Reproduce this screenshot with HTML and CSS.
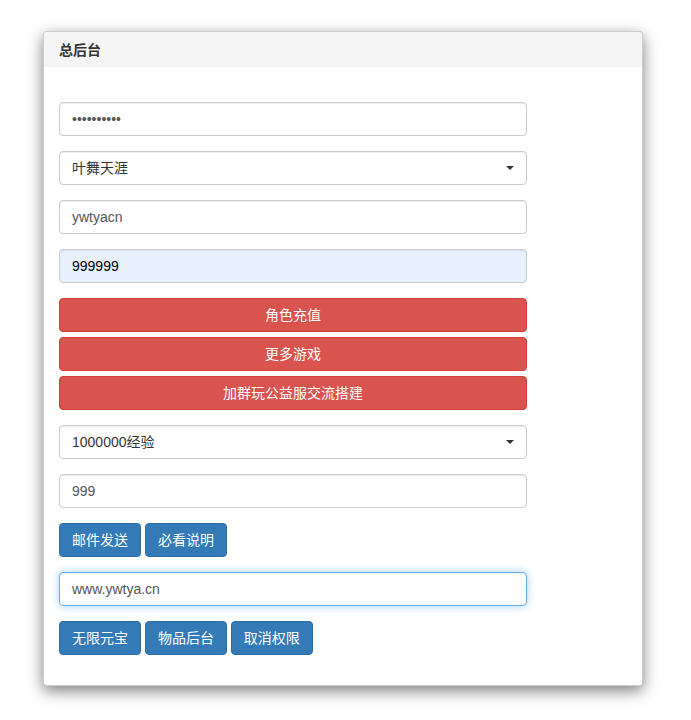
FILE: index.html
```html
<!DOCTYPE html>
<html lang="zh-CN">
<head>
    <meta charset="UTF-8">
    <meta name="viewport" content="width=device-width, initial-scale=1.0">
    <title>总后台</title>
    <link rel="stylesheet" href="styles.css">
</head>
<body>
    <div class="panel">
        <div class="panel-heading">总后台</div>

        <div class="panel-body">
            <!-- Account -->
            <input type="password" class="form-control" value="ywtyacn123">

            <div class="select-wrap">
                <select class="form-control">
                    <option>叶舞天涯</option>
                </select>
            </div>

            <input type="text" class="form-control" value="ywtyacn">
            <input type="text" class="form-control autofill" value="999999">

            <!-- Recharge -->
            <div class="btn-stack">
                <button class="btn btn-danger btn-block">角色充值</button>
                <button class="btn btn-danger btn-block">更多游戏</button>
                <button class="btn btn-danger btn-block">加群玩公益服交流搭建</button>
            </div>

            <!-- Mail -->
            <div class="select-wrap">
                <select class="form-control">
                    <option>1000000经验</option>
                </select>
            </div>

            <input type="text" class="form-control" value="999">

            <div class="btn-row">
                <button class="btn btn-primary">邮件发送</button>
                <button class="btn btn-primary">必看说明</button>
            </div>

            <!-- Admin -->
            <input type="text" class="form-control focus" value="www.ywtya.cn">

            <div class="btn-row">
                <button class="btn btn-primary">无限元宝</button>
                <button class="btn btn-primary">物品后台</button>
                <button class="btn btn-primary">取消权限</button>
            </div>
        </div>
    </div>
</body>
</html>
```

FILE: styles.css
```css
/* General Styles */
body {
    font-family: "Liberation Sans", "Noto Sans CJK SC", sans-serif;
    font-size: 14px;
    color: #333;
    background-color: #fff;
    margin: 0;
    padding: 31px 0 34px 43px;
}

.panel {
    width: 598px;
    background-color: #fff;
    border: 1px solid rgba(0, 0, 0, 0.2);
    border-radius: 4px;
    box-shadow: 0 5px 15px rgba(0, 0, 0, 0.5);
    overflow: hidden;
}

.panel-heading {
    background-color: #f5f5f5;
    padding: 11px 15px 10px;
    height: 14px;
    line-height: 14px;
    font-weight: bold;
    font-size: 14px;
    color: #333;
}

.panel-body {
    padding: 35px 15px 15px;
    width: 468px;
}

/* Inputs */
.form-control {
    display: block;
    box-sizing: border-box;
    width: 100%;
    height: 34px;
    margin: 0 0 15px;
    padding: 6px 12px;
    font-family: inherit;
    font-size: 14px;
    color: #555;
    background-color: #fff;
    border: 1px solid #ccc;
    border-radius: 4px;
    box-shadow: inset 0 1px 1px rgba(0, 0, 0, 0.075);
    outline: none;
}

.autofill {
    background-color: #e8f0fe;
    color: #000;
}

.focus {
    border-color: #66afe9;
    box-shadow: inset 0 1px 1px rgba(0, 0, 0, 0.075), 0 0 8px rgba(102, 175, 233, 0.6);
}

.select-wrap {
    position: relative;
}

.select-wrap select {
    appearance: none;
    -webkit-appearance: none;
    color: #333;
}

.select-wrap::after {
    content: "";
    position: absolute;
    right: 13px;
    top: 15px;
    border-left: 4px solid transparent;
    border-right: 4px solid transparent;
    border-top: 4px solid #333;
}

/* Buttons */
.btn {
    display: inline-block;
    height: 34px;
    padding: 6px 12px;
    font-family: inherit;
    font-size: 14px;
    line-height: 20px;
    color: #fff;
    border: 1px solid transparent;
    border-radius: 4px;
    cursor: pointer;
}

.btn-danger {
    background-color: #d9534f;
    border-color: #d43f3a;
}

.btn-primary {
    background-color: #337ab7;
    border-color: #2e6da4;
}

.btn-block {
    display: block;
    width: 100%;
}

.btn-block + .btn-block {
    margin-top: 5px;
}

.btn-stack,
.btn-row {
    margin-bottom: 15px;
}
```
